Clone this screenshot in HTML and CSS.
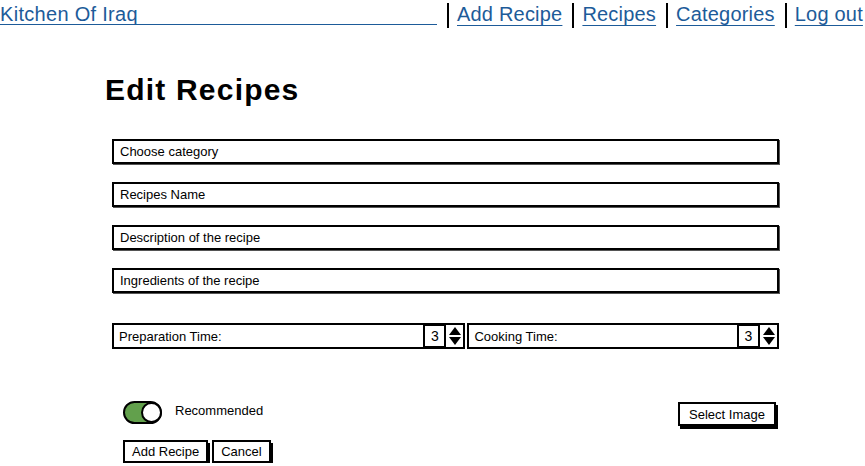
FILE: index.html
```html
<!DOCTYPE html>
<html lang="en">

<head>
    <meta charset="UTF-8">
    <meta name="viewport" content="width=device-width, initial-scale=1.0">
    <title>Edit Recipes</title>
    <link rel="stylesheet" href="styles.css">
</head>

<body>
    <div class="nav">
        <a class="brand" href="#">Kitchen Of Iraq</a>
        <a class="nav-link" href="#">Add Recipe</a>
        <a class="nav-link" href="#">Recipes</a>
        <a class="nav-link" href="#">Categories</a>
        <a class="nav-link" href="#">Log out</a>
    </div>

    <div class="main">
        <h1>Edit Recipes</h1>

        <div class="form">
            <div class="field">Choose category</div>
            <div class="field">Recipes Name</div>
            <div class="field">Description of the recipe</div>
            <div class="field">Ingredients of the recipe</div>

            <div class="time-row">
                <div class="time-box prep">
                    <span class="time-label">Preparation Time:</span>
                    <span class="num">3</span>
                    <svg class="spin" width="16" height="22" viewBox="0 0 16 22">
                        <path d="M8 2 L14 10 L2 10 Z" fill="#000" />
                        <path d="M2 12 L14 12 L8 20 Z" fill="#000" />
                    </svg>
                </div>
                <div class="time-box cook">
                    <span class="time-label">Cooking Time:</span>
                    <span class="num">3</span>
                    <svg class="spin" width="16" height="22" viewBox="0 0 16 22">
                        <path d="M8 2 L14 10 L2 10 Z" fill="#000" />
                        <path d="M2 12 L14 12 L8 20 Z" fill="#000" />
                    </svg>
                </div>
            </div>

            <div class="option-row">
                <div class="toggle-wrap">
                    <div class="toggle"><div class="knob"></div></div>
                    <span class="toggle-label">Recommended</span>
                </div>
                <button class="btn">Select Image</button>
            </div>

            <div class="actions">
                <button class="btn">Add Recipe</button>
                <button class="btn">Cancel</button>
            </div>
        </div>
    </div>
</body>

</html>
```

FILE: styles.css
```css
body {
    margin: 0;
    background: #fff;
    color: #000;
    font-family: "Liberation Sans", Arial, sans-serif;
}

.nav {
    display: flex;
    align-items: stretch;
    height: 28px;
    padding-top: 1px;
}

.brand,
.nav-link {
    color: #1d5b99;
    font-size: 20px;
    line-height: 26px;
}

.brand {
    width: 437px;
    border-bottom: 1px solid #1d5b99;
    height: 23px;
    text-decoration: none;
    letter-spacing: 0.3px;
}

.nav-link {
    margin-left: 10px;
    padding-left: 8px;
    border-left: 2px solid #000;
    height: 25px;
    margin-top: 2px;
    line-height: 22px;
    letter-spacing: 0.2px;
    text-decoration: underline;
    text-underline-offset: 4px;
    text-decoration-thickness: 1px;
}

.main {
    padding-left: 105px;
}

h1 {
    margin: 0;
    padding-top: 44px;
    font-size: 30px;
    line-height: 34px;
    font-weight: bold;
    letter-spacing: 1.2px;
}

.form {
    margin-left: 7px;
    margin-top: 32px;
    width: 667px;
}

.field {
    box-sizing: border-box;
    height: 25px;
    margin-bottom: 18px;
    border: 2px solid #000;
    box-shadow: 1px 1px 0 #555;
    padding-left: 6px;
    font-size: 13px;
    line-height: 21px;
}

.time-row {
    display: flex;
    gap: 2px;
    margin-top: 30px;
}

.time-box {
    box-sizing: border-box;
    height: 26px;
    border: 2px solid #000;
    display: flex;
    align-items: center;
    padding-left: 5px;
    font-size: 13px;
}

.prep {
    width: 354px;
}

.cook {
    width: 312px;
}

.time-label {
    flex: 1;
}

.num {
    box-sizing: border-box;
    width: 23px;
    height: 22px;
    border: 2px solid #000;
    border-top-width: 1px;
    border-bottom-width: 1px;
    text-align: center;
    font-size: 14px;
    line-height: 20px;
    margin-right: 1px;
}

.option-row {
    display: flex;
    justify-content: space-between;
    align-items: flex-start;
    margin-top: 52px;
}

.toggle-wrap {
    display: flex;
    align-items: center;
    margin-left: 11px;
}

.toggle {
    box-sizing: border-box;
    width: 39px;
    height: 23px;
    border: 2px solid #000;
    border-radius: 12px;
    background: #62a04c;
    display: flex;
    justify-content: flex-end;
}

.knob {
    box-sizing: border-box;
    width: 21px;
    height: 21px;
    margin: -1px -2px 0 0;
    border: 2px solid #000;
    border-radius: 50%;
    background: #fff;
}

.toggle-label {
    margin-left: 13px;
    font-size: 13px;
    margin-top: -4px;
}

.btn {
    box-sizing: border-box;
    height: 24px;
    padding: 0 7px;
    border: 2px solid #000;
    background: #fff;
    box-shadow: 2px 3px 0 #000;
    font-family: "Liberation Sans", Arial, sans-serif;
    font-size: 13px;
    color: #000;
    margin-top: 1px;
}

.option-row .btn {
    width: 98px;
    margin-right: 3px;
}

.actions {
    display: flex;
    gap: 4px;
    margin-top: 13px;
    margin-left: 11px;
}

.actions .btn {
    height: 23px;
}
```
